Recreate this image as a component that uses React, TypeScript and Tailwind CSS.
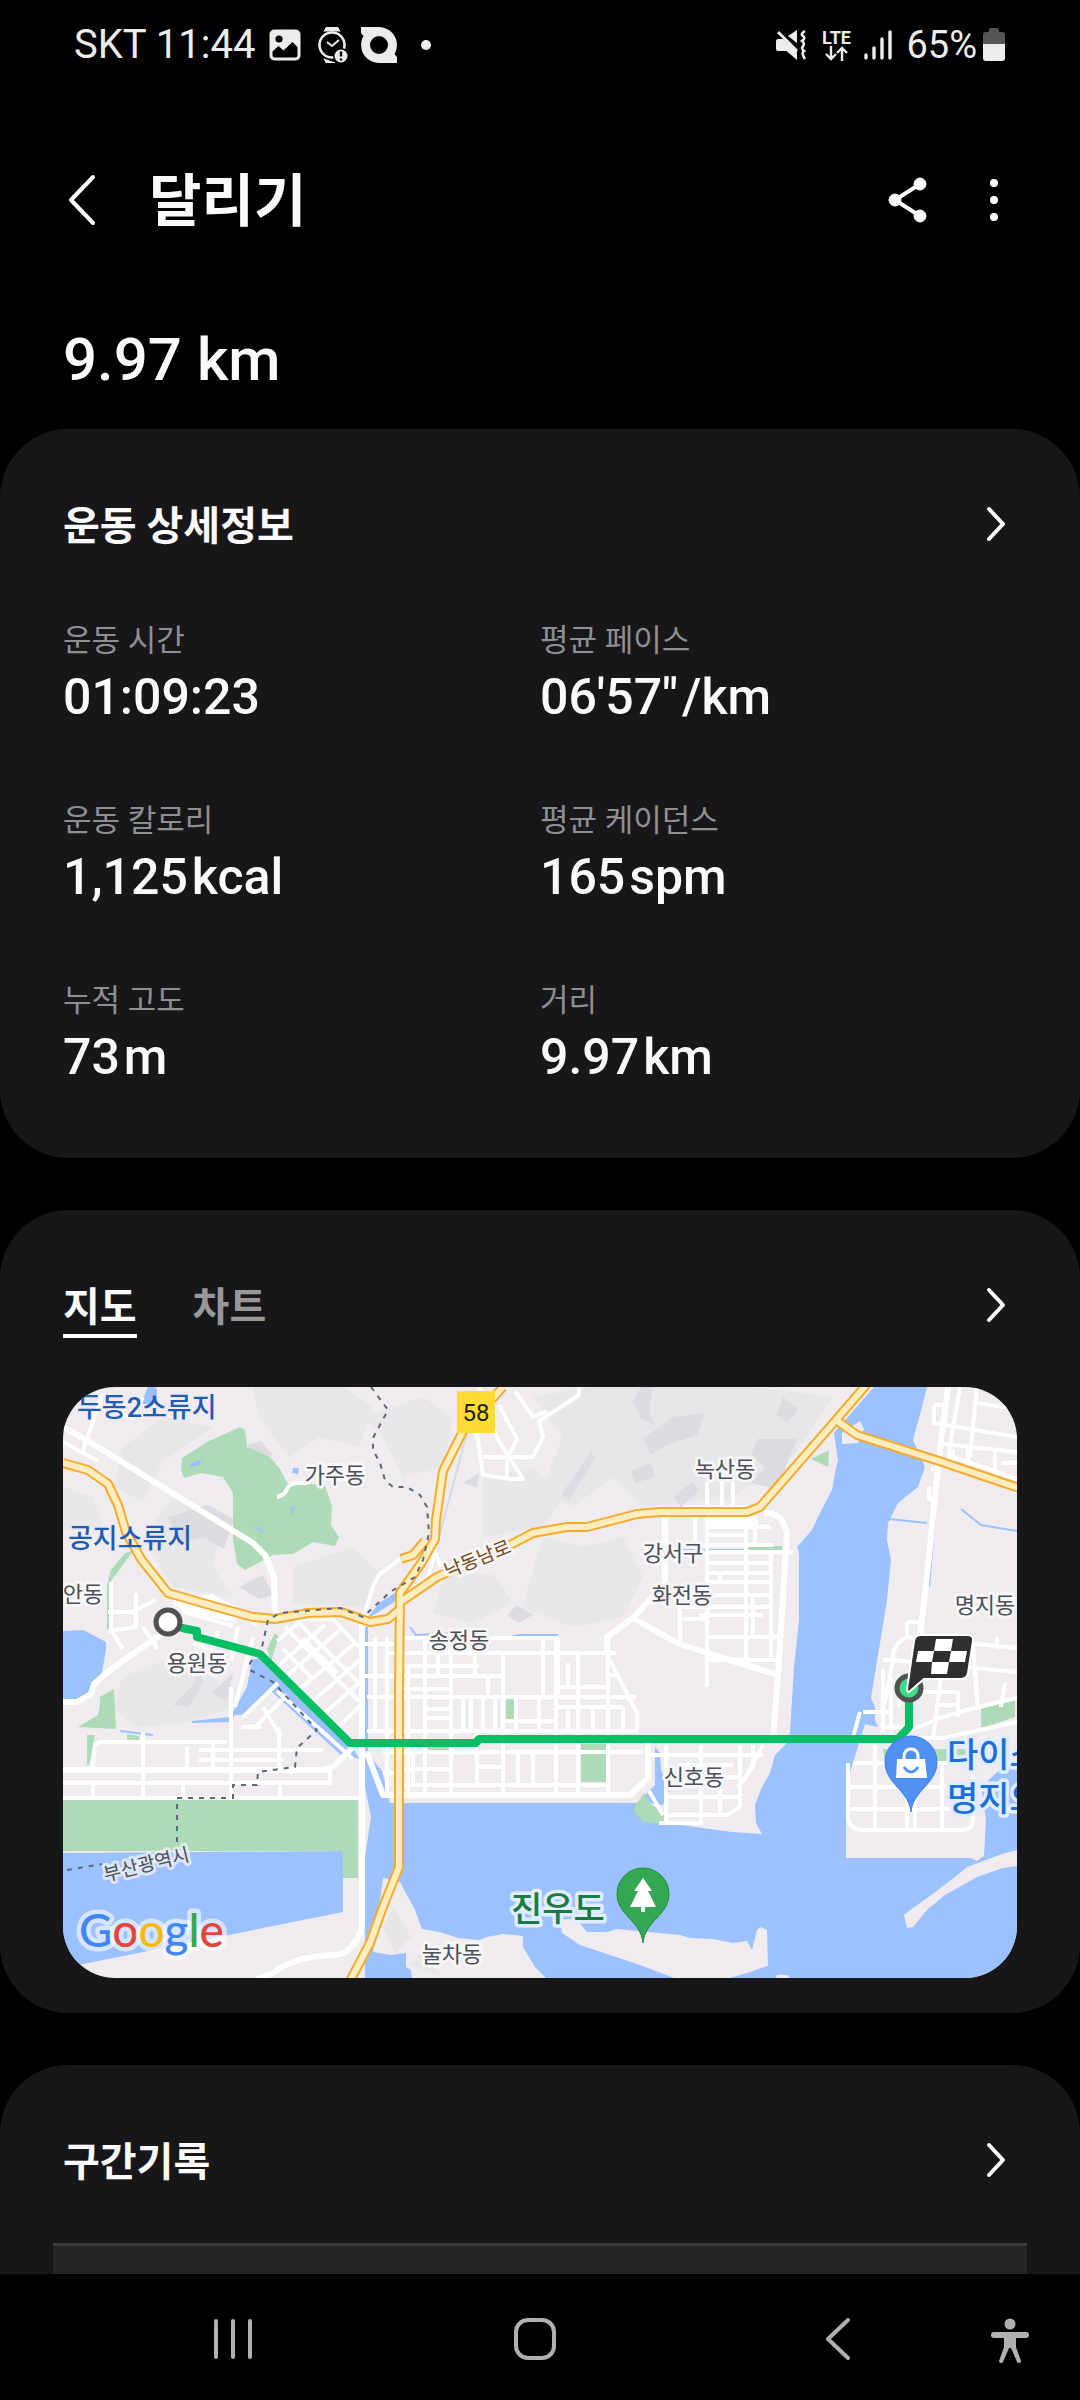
import type { ReactNode } from "react";

const stats = [
  { label: "운동 시간", value: "01:09:23", unit: "" },
  { label: "평균 페이스", value: "06'57\"", unit: "/km" },
  { label: "운동 칼로리", value: "1,125", unit: "kcal" },
  { label: "평균 케이던스", value: "165", unit: "spm" },
  { label: "누적 고도", value: "73", unit: "m" },
  { label: "거리", value: "9.97", unit: "km" },
];

function StatusBar() {
  return (
    <div className="flex h-[90px] items-center justify-between pl-[74px] pr-[75px] text-[#ececec]">
      <div className="flex items-center">
        <span className="text-[40px] leading-[48px]">SKT 11:44</span>
        <svg className="ml-[14px] h-8 w-8" viewBox="0 0 32 32" fill="none">
          <rect x="0.5" y="0.5" width="31" height="31" rx="5" fill="#ececec" />
          <circle cx="10" cy="10" r="3.6" fill="#000" />
          <path d="M3.5 22.5 9.5 17l5 4.5L23.500 13l5 5V26q0 2.500-2.500 2.500H6Q3.500 28.500 3.500 26Z" fill="#000" />
        </svg>
        <svg className="ml-4 h-9 w-8" viewBox="0 0 32 36" fill="none">
          <path d="M7 4.500 9 .5h12l2 4M7 31.500 9 35.500h9" fill="#ececec" stroke="#ececec" />
          <circle cx="15" cy="18" r="12.500" stroke="#ececec" strokeWidth="2.600" />
          <path d="m10 15 5 4 7-6" stroke="#ececec" strokeWidth="2" />
          <circle cx="24" cy="29" r="8" fill="#000" />
          <circle cx="24" cy="29" r="6.500" fill="#ececec" />
          <path d="M24 24.500v5M24 31.500v2" stroke="#000" strokeWidth="2.400" />
        </svg>
        <svg className="ml-3 h-9 w-9" viewBox="0 0 36 36">
          <path
            fillRule="evenodd"
            d="M0 0h18a18 18 0 0 1 15.500 27l2.500 3v6H18A18 18 0 0 1 2.500 9L0 6Zm18 9a9 9 0 1 0 0 18 9 9 0 0 0 0-18Z"
            fill="#ececec"
          />
        </svg>
        <span className="ml-6 h-[10px] w-[10px] rounded-full bg-[#ececec]" />
      </div>
      <div className="flex items-center">
        <svg className="h-8 w-[30px]" viewBox="0 0 30 32" fill="none">
          <path d="M12 7 21 1v13ZM2 10h5l14 12v9L10.500 22H2Q0 22 0 20v-8q0-2 2-2Z" fill="#ececec" />
          <path d="M2 3 21 22" stroke="#ececec" strokeWidth="3" />
          <path d="M29 2q-5 3-2 5t-1 5q3 2 1 5t1 5q-3 2 1 8" stroke="#ececec" strokeWidth="2.600" />
        </svg>
        <div className="ml-[14px] flex w-8 flex-col items-center">
          <span className="text-[18px] font-bold leading-4">LTE</span>
          <svg className="h-[15px] w-6" viewBox="0 0 24 15" fill="none" stroke="#ececec" strokeWidth="2.400">
            <path d="M7 0v13M2 8l5 5 5-5M18 15V2M13 7l5-5 5 5" />
          </svg>
        </div>
        <svg className="ml-3 h-8 w-7" viewBox="0 0 28 32" stroke="#ececec" strokeWidth="3.400" strokeLinecap="round">
          <path d="M2 26v3M10 19v10M18 10v19M26 3v26" />
        </svg>
        <span className="ml-[14px] text-[38px] leading-[48px]">65%</span>
        <svg className="ml-[6px] h-[34px] w-[22px]" viewBox="0 0 22 34">
          <path d="M6 2q0-2 2-2h6q2 0 2 2v2h3q3 0 3 3v10H0V7q0-3 3-3h3Z" fill="#555" />
          <path d="M0 16h22v14q0 3-3 3H3q-3 0-3-3Z" fill="#ececec" />
        </svg>
      </div>
    </div>
  );
}

function Header() {
  return (
    <header className="mt-[45px] flex h-[130px] items-center pl-[63px] pr-[73px]">
      <button type="button" aria-label="뒤로" className="w-[86px]">
        <svg className="h-[52px] w-9" viewBox="0 0 36 52" fill="none" stroke="#fff" strokeWidth="4" strokeLinecap="round" strokeLinejoin="round">
          <path d="M30 3 8 26l22 23" />
        </svg>
      </button>
      <h1 className="pt-1 text-[57px] font-bold leading-[80px]">달리기</h1>
      <button type="button" aria-label="공유" className="ml-auto">
        <svg className="h-[46px] w-10" viewBox="0 0 40 46" fill="#fff" stroke="#fff">
          <path d="M32 7 7 23l25 16" fill="none" strokeWidth="4" />
          <circle cx="32" cy="7" r="6" />
          <circle cx="7" cy="23" r="6" />
          <circle cx="32" cy="39" r="6" />
        </svg>
      </button>
      <button type="button" aria-label="더보기" className="ml-[53px]">
        <svg className="h-[46px] w-[26px]" viewBox="0 0 26 46" fill="#fff">
          <circle cx="13" cy="6" r="4" />
          <circle cx="13" cy="23" r="4" />
          <circle cx="13" cy="40" r="4" />
        </svg>
      </button>
    </header>
  );
}

function MoreButton({ label }: { label: string }) {
  return (
    <button type="button" aria-label={label} className="mb-[2px] ml-auto mr-[10px]">
      <svg className="h-9 w-[22px]" viewBox="0 0 22 36" fill="none" stroke="#fff" strokeWidth="4" strokeLinecap="round" strokeLinejoin="round">
        <path d="m4 3 14 15L4 33" />
      </svg>
    </button>
  );
}

function Title({ children }: { children: ReactNode }) {
  return <h2 className="pt-1 text-[40px] font-bold leading-[60px]">{children}</h2>;
}

const water = "#9cc1ff";
const land = "#efebef";
const park = "#addbb7";

// hillside shading
const hillsLight = [
  "M190 0h90l30 20-14 40-40-10-30 20-30-40Z",
  "M60 60l40-30 50 10-20 14-30 20-20 40-30-14Z",
  "M300 30l60-20 30 20-10 50-40 10-20-40Z",
  "M470 10l60-10h160l80 10-40 60-60 40-90 10-30-30-40 30-30-20 20-50Z",
  "M420 90l50-10 30 30-20 30-60 10Z",
  "M230 180l60-20 30 30-20 30-70-4Z",
  "M110 110l50 20-10 50 20 30-60-10-30-50Z",
  "M480 150l40 10 40-10 20 40-20 40-50 10-50-20Z",
  "M380 190l50-4 20 30-40 20-40-10Z",
  "M60 290l50-20 40 20 20 30-50 16-50 4-20-20Z",
  "M0 100l30 10 10 30-40 4Z",
];
const hillsDark = [
  "M580 52l30-22 32-4-8 22-30 10-16 10Z",
  "M694 52l40 0-20 50-26-6 14-16-14-12Z",
  "M720 10l16 12-12 14-10-8Z",
  "M498 108l30-44 4 8-26 40Z",
  "M568 84l20-8 4 14-20 6Z",
  "M105 130l40-12 26 14-10 30-20-12-24 6Z",
  "M184 58l14-4 12 14-14 6Z",
  "M176 200l24-12 10 20-14 4Z",
  "M110 318l20-20 6-20 4 18-14 24Z",
  "M570 14l8-14h12l-4 24 6 14-14-6Z",
  "M610 110l20-16 6 10-18 16Z",
  "M400 96l16-10-2 14Z",
  "M444 228l10-10 16 10-14 8Z",
  "M148 306l22-20-6 28Z",
];

const parks = [
  "M119 71 144 55l33-15 5 3 2 17 23 10 10 12 7 14 38 2 7 22-1 18 8 12-4 9-22-4-20 12-20 1-28 15-8-6-4-25V106l-10-16-22-4-17 5-3-8Z",
  "M0 413h295v78h-15v-27H0Z",
  "M48 183l14-17 8-2-22 30v49h-4v-45Z",
  "M37 318l0-8 14-8 2 40-38-2 20-12Z",
  "M24 348h8l-6 30h-2ZM64 347l12 2v4H64Z",
  "M204 262l8-16 4 4-8 24Z",
  "M518 357h25v38h-25ZM443 312h8v21h-8ZM365 358h22v5h-22Z",
  "M820 362h94l-12 14h-80Z",
  "M918 322l34-10v18l-30 10h-4Z",
  "M748 72l18-9-1 17Z",
];

const waters = [
  "M0 244 20 243l23 12v8l-4 22-10 13-2 8-13 9H0Z",
  "M0 466l280-2v61L0 581Z",
  "M302 591V470l6-40-6-30V372l-22-2-73-67-28 25h-7l-5 7-38 1v-2l38-4 17-30 5-27 8-3 95 94 3 6 14 2 10 12 8 32h247l18-18V360l5 6 1 17 8 20-6 15-16-2-7 7 10 12 24 2 58 8 30 2-6-11-1-18 7-18 8-14 5-18 11-11 4-11 4-66 5-47V165l-2-5 15-17 6-13 14-27 3-17 3-13-4-27 40-46h53l-5 20-9 33 12 27-7 20-20 16-10 20-1 17 4 20-4 40-16 98 4 9v13l3 7-13-3-9 29-10 32v73h125l6 3 7-5 2-36-5-33 22-20 17-10v241Z",
  "M82 7l6-14 6 10v14H76ZM230 81l6 0-1 6-6-1Z",
];

const islands = [
  "M954 463l-15 4-35 13-12 10-25 19-17 12-9 7 3 13 6-1 14-17 18-15 32-18 26-9 14-2Z",
  "M497 533l15-2 12 14h20l10-3 63 6 10 3 23 1 20 4 14-2 5 9 5-20 4-3 6 3 1 36-21 7-17 5h-56l-34-13-60-20-18-12Z",
  "M320 491l17 4 15 28 7 19 18 3 18 6 22 2 7-3 16-3 20 2v11l12 20 11 11H349l-1-8-5-3v-14l-16 2-17-3Z",
  "M714 588l10 0 3 3h-14ZM779 46l18-12 4 8-6 14-16 1Z",
];

const arterials = [
  "M0 40 27 55 164 140 190 156 202 168 211 190 212 232",
  "M0 383H255q14 0 20-8L290 360",
  "M299 235V535q0 12-9 23t-20 10q-40 2-60 18l-16 6",
  "M701 126q14 0 18 8t5 12L715 288 710 352",
  "M885 0 876 70 866 170 857 250",
  "M637 264 715 288",
  "M570 231 614 256 657 270 715 288",
  "M602 130V196L570 231 544 250V268",
  "M585 350V391L567 408H320L304 366",
  "M0 315h14l14-8 3-10 16-14 40-28 18-12",
];

const streets = [
  "M40 6 20 63M0 55 35 74M45 20 70 32 80 10M45 225l24 0 24-12M48 195V243L60 262M73 206V240L45 244M80 240 95 262M110 218l30-6 30 10 24 16M120 225l50 14M130 256l30 12M155 244 150 262M175 240 168 274M190 250 172 320",
  "M29 382 32 358 37 355H164M0 396H267V382M0 411H297M80 345V411M30 396V411M120 396V411M168 300V411M217 396V411M124 360V383M136 363H260M136 373H220M124 383M150 355V383M180 330 215 296M190 342 224 308M178 340h20M200 320l18 30M214 304 290 372M216 340v42",
  "M215 232H270L296 260M222 240 296 314M232 232 296 296M214 254 240 232M214 280 262 238M225 288 278 242M237 302 292 256M250 314 298 272M262 326 298 294M275 340 298 318M220 262l30 30M240 252l34 34",
  "M296 257H336M299 289H336M304 310H336M304 344H336M312 250V300M324 250V409M312 300V344M320 365H336M320 386H336",
  "M337 251H495M325 266H553M337 279H416M337 289H440M307 310H573M337 302H390M337 344H576M337 365H580M337 382H388M337 398H545M345 280V409M350 366V398M362 250V409M375 266V289M388 250V409M412 266V289M416 380H440M414 344V398M440 266V409M455 365V398M470 365V398M480 251V310M493 251V409M515 266V409M545 266V409M362 322H388M362 331H388M400 310V344M408 310V344M420 310V344M432 310V344M453 310V344M476 310V344M440 334H493M493 300H545M505 276V300M493 320H560M505 320V344M530 320V344M560 320V344M425 289V310M547 273 574 326V344M495 251V310M547 288H555",
  "M416 0 432 46 436 54 460 92 448 92 420 88 414 46M436 18 454 52 444 72V92M452 4 470 30 484 24M420 70H470L480 50 476 34 516 8V0",
  "M644 95V300M659 95V126M670 95V126M632 130V158M683 126V280M708 165V270M621 120H684M644 134H690M644 140H708M644 148H683M692 140V158M632 158H710M644 165H730M644 176H708M644 186H708M644 195H708M644 208H708M617 220H708M637 228H700M644 250H715M644 273H715M617 220V256M657 186V195M690 208V250M620 232H644",
  "M603 358V435M638 358V436M657 380V428M677 358V420L664 428H603M588 368H700M603 410H675M603 390H677M615 378H670M690 358V380L675 400M700 358 680 395M586 404 600 428M596 436H640",
  "M897 0 885 72M914 0 907 70M871 18H885M871 18V36L954 50M880 57 954 65M914 16 954 22M885 68 954 92M905 60V84M890 62V80M932 62V88M938 76H954M868 82H876M866 100V112H872",
  "M820 273 830 273V265L836 255 844 250 954 261M830 273 954 285M830 273 822 315M820 282V345M828 290V352M836 290V320M844 235V250M844 235H857M910 258 915 323M870 333 915 320 954 311M878 290 870 352M860 305H895V330M872 318H895M820 340H845M832 350 870 334M934 250V262M942 296 938 320M797 325 790 350M797 351H880L954 335M800 325H830M790 376H912M784 400H915M784 422H915M785 376V430Q786 443 800 443H900Q910 443 910 430V376M812 358V443M844 400V443M852 400V443M879 376V443",
];

const highways = [
  "M0 76 25 83 45 97 55 118 63 145 78 172 105 206 150 219 190 230 212 232 245 226 278 225 307 235 325 232 337 222",
  "M440 0 400 44 380 84 373 133 372 152 359 175 337 206 336 303V480L320 520 307 556 287 594",
  "M338 172 350 168 362 154",
  "M336 216 374 190 447 158 470 146 504 140 524 140 574 127 597 125H684L697 120 773 33 804-3",
  "M773 33 794 48 876 74 938 95 956 101",
];

const smallLabels = [
  { text: "가주동", x: 272, y: 96 },
  { text: "안동", x: 20, y: 215 },
  { text: "용원동", x: 134, y: 284 },
  { text: "송정동", x: 396, y: 261 },
  { text: "강서구", x: 610, y: 174 },
  { text: "화전동", x: 619, y: 216 },
  { text: "녹산동", x: 662, y: 90 },
  { text: "명지동", x: 922, y: 226 },
  { text: "신호동", x: 631, y: 398 },
  { text: "눌차동", x: 389, y: 575 },
];

function RouteMap() {
  return (
    <svg
      role="img"
      aria-label="달리기 경로 지도"
      className="mt-[49px] h-auto w-full rounded-[52px] font-['Roboto','Noto_Sans_CJK_KR',sans-serif]"
      viewBox="0 0 954 591"
      fill="none"
    >
      <rect width="954" height="591" fill={land} />
      {hillsLight.map((d) => <path key={d} d={d} fill="#e7e7e9" />)}
      {hillsDark.map((d) => <path key={d} d={d} fill="#dcdbdf" />)}
      {waters.map((d) => <path key={d} d={d} fill={water} />)}
      {islands.map((d) => <path key={d} d={d} fill={land} />)}
      {parks.map((d) => <path key={d} d={d} fill={park} />)}
      <path d="M570 423l11-17 8 12 14 8v11l-23-2Z" fill={park} />
      <path d="M320 540l10-20 18 30-16 16ZM345 578l16-14 14 24Z" fill="#e6e6e8" />
      <path d="M127 77l12-5-3 6-8 2ZM228 118l4 3-4 8ZM190 139l10 4-1 3Z" fill={water} />
      <path d="M301 238V366M90 348 57 344M347 240l6 8 40-2 50 6 12-4h40M612 163h80M826 132l38 4M876 80 866 200M898 122l20 16 36 6" stroke={water} strokeWidth="2" />
      <path d="M303 240V364" stroke={water} strokeWidth="4" />
      <path d="M685 161h34" stroke={park} strokeWidth="4" />
      <path d="M404 46 376 150" stroke="#d4dade" strokeWidth="2" />
      <path d="M304 232 316 216 332 206 336 212Z" fill={water} />

      <g stroke="#fff" strokeLinejoin="round">
        {streets.map((d) => <path key={d} d={d} strokeWidth="4" />)}
        {arterials.map((d) => <path key={d} d={d} strokeWidth="6" />)}
        <path d="M214 110q8-2 10-8t12-6h8M300 232 310 200 316 188 337 172M345 206 366 188 372 164 378 180" strokeWidth="4" />
        <path d="M112 214 148 208 176 222 172 234 120 224ZM646 130h48v8h-48Z" fill="#fff" strokeWidth="2" />
      </g>

      <g strokeLinejoin="round">
        {highways.map((d) => <path key={d} d={d} stroke="#f3ac2c" strokeWidth="10" />)}
        {highways.map((d) => <path key={d} d={d} stroke="#ffecbf" strokeWidth="6" />)}
      </g>

      <path
        d="M308 0 325 23 310 51V63L317 76 322 93 330 100H344L357 108 364 120 366 146 360 173 352 190 327 205 300 230 277 221 217 226 205 233 199 260 187 276V283L210 295 254 343 234 361 232 380 195 385 194 398H170V411H114V460M4 483 39 477"
        stroke="#5c6878"
        strokeWidth="2"
        strokeDasharray="5 6"
      />

      <path
        d="M105 237 119 241 134 244V250L197 267 287 356H413L416 352H835L846 340V313"
        stroke="#04bf63"
        strokeWidth="8"
        strokeLinejoin="round"
      />

      <rect x="394" y="4" width="38" height="42" fill="#ffdb33" />
      <text x="413" y="34" textAnchor="middle" fontSize="24" fill="#1f1f14">58</text>

      <g fontSize="22" fill="#4c4f54" stroke="#f7f6f8" strokeWidth="6" strokeLinejoin="round" paintOrder="stroke" textAnchor="middle">
        {smallLabels.map((l) => <text key={l.text} x={l.x} y={l.y}>{l.text}</text>)}
        <text transform="translate(85 484) rotate(-14)" fontSize="19" strokeOpacity="0.7">부산광역시</text>
        <text transform="translate(417 178) rotate(-22)" fontSize="19" fill="#7a4512">낙동남로</text>
      </g>
      <g fontSize="27" fill="#1f5cb4" className="font-medium">
        <text x="14" y="30">두동2소류지</text>
        <text x="5" y="161">공지소류지</text>
      </g>
      <g fontSize="34" stroke="#e0ecff" strokeWidth="7" strokeLinejoin="round" paintOrder="stroke" className="font-medium">
        <text x="448" y="534" fill="#1b7a40">진우도</text>
        <text x="884" y="380" fill="#1a6fdb">다이소</text>
        <text x="884" y="424" fill="#1a6fdb">명지오</text>
      </g>

      <path d="M848 425c-2-22-26-28-26-50a26 26 0 0 1 52 0c0 22-24 28-26 50Z" fill="#4f90f3" stroke="#3f7fe0" />
      <path d="M834 372h28l2 19h-31Z" fill="#fff" />
      <path d="M841 373v-3q0-8 7-8t7 8v3" stroke="#fff" strokeWidth="3" />
      <path d="M841 380q7 10 14 0" stroke="#4f90f3" strokeWidth="3" />

      <path d="M580 556c-2-22-26-28-26-49a26 26 0 0 1 52 0c0 21-24 27-26 49Z" fill="#33a752" stroke="#248a40" />
      <path d="m580 491 9 13h-4l8 16h-11v5h-4v-5h-11l8-16h-4Z" fill="#fff" />

      <circle cx="105" cy="235" r="12" fill="#fff" stroke="#505050" strokeWidth="5" />
      <circle cx="846" cy="301" r="12" fill="#3ddb86" stroke="#505050" strokeWidth="5" />
      <path
        d="M858 248h46q7 0 6 6l-5 32q-1 6-7 6h-37l-15 13q-2 0-2-3l7-48q1-6 7-6Z"
        fill="#2f2f2f"
        stroke="#fff"
        strokeWidth="2"
      />
      <path d="M873 252h17l-2 12h-17ZM855 264h16l-2 11h-16ZM888 264h16l-2 11h-16ZM869 275h17l-2 12h-16Z" fill="#fff" />

      <text
        x="16"
        y="560"
        fontSize="46"
        className="font-['Lato',sans-serif] font-medium"
        stroke="#fff"
        strokeOpacity="0.6"
        strokeWidth="9"
        strokeLinejoin="round"
        paintOrder="stroke"
      >
        <tspan fill="#4285f4">G</tspan>
        <tspan fill="#e2463b">o</tspan>
        <tspan fill="#f5b90f">o</tspan>
        <tspan fill="#4285f4">g</tspan>
        <tspan fill="#37a852">l</tspan>
        <tspan fill="#e2463b">e</tspan>
      </text>
    </svg>
  );
}

function NavBar() {
  return (
    <nav className="grid h-[126px] grid-cols-[1fr_1fr_1fr_42px] items-center justify-items-center bg-black pl-[82px] pr-[49px] pt-1">
      <button type="button" aria-label="최근 앱">
        <svg className="h-11 w-11" viewBox="0 0 44 44" stroke="#b0b0b0" strokeWidth="4" strokeLinecap="round">
          <path d="M5 4v36M22 4v36M39 4v36" />
        </svg>
      </button>
      <button type="button" aria-label="홈">
        <svg className="h-11 w-11" viewBox="0 0 44 44" fill="none" stroke="#b0b0b0" strokeWidth="4">
          <rect x="3" y="3" width="38" height="38" rx="12" />
        </svg>
      </button>
      <button type="button" aria-label="뒤로 가기">
        <svg className="h-11 w-11" viewBox="0 0 44 44" fill="none" stroke="#b0b0b0" strokeWidth="4" strokeLinecap="round" strokeLinejoin="round">
          <path d="M32 3 12 22l20 19" />
        </svg>
      </button>
      <button type="button" aria-label="접근성" className="pt-1">
        <svg className="h-[46px] w-10" viewBox="0 0 40 46" fill="#b0b0b0">
          <circle cx="20" cy="6" r="5.500" />
          <path d="M4 14h32q3 0 3 3t-3 3H26v9l5 14q0 2-2 2t-2-1l-6-14h-2l-6 14q0 1-2 1t-2-2l5-14v-9H4q-3 0-3-3t3-3Z" />
        </svg>
      </button>
    </nav>
  );
}

export default function App() {
  return (
    <div className="flex min-h-screen flex-col bg-black font-['Roboto','Noto_Sans_CJK_KR',sans-serif] text-[#fafafa]">
      <StatusBar />
      <Header />
      <main className="flex grow flex-col gap-[52px]">
        <div>
          <p className="px-[63px] pb-[29px] pt-[55px] text-[60px] font-medium leading-[80px]">9.97 km</p>
          <section className="rounded-[68px] bg-[#17171a] px-[63px] pb-[65px] pt-16">
            <div className="flex items-center">
              <Title>운동 상세정보</Title>
              <MoreButton label="운동 상세정보 보기" />
            </div>
            <dl className="mt-16 grid grid-cols-2 gap-y-[68px]">
              {stats.map((s) => (
                <div key={s.label}>
                  <dt className="text-[31px] leading-[40px] text-[#8f8f91]">{s.label}</dt>
                  <dd className="flex gap-1 text-[50px] font-medium leading-[72px]">
                    <span>{s.value}</span>
                    {s.unit && <span>{s.unit}</span>}
                  </dd>
                </div>
              ))}
            </dl>
          </section>
        </div>

        <section className="rounded-[68px] bg-[#17171a] px-[63px] pb-[35px] pt-16">
          <div className="flex items-center">
            <div role="tablist" className="flex gap-14 text-[40px] font-bold leading-[52px]">
              <button type="button" role="tab" aria-selected="true" className="border-b-4 border-white pt-2">
                지도
              </button>
              <button type="button" role="tab" aria-selected="false" className="border-b-4 border-transparent pt-2 text-[#98989a]">
                차트
              </button>
            </div>
            <MoreButton label="지도 보기" />
          </div>
          <RouteMap />
        </section>

        <section className="flex grow flex-col rounded-t-[68px] bg-[#17171a] px-[53px] pt-16">
          <div className="flex items-center px-[10px]">
            <Title>구간기록</Title>
            <MoreButton label="구간기록 보기" />
          </div>
          <div className="mt-[50px] min-h-[31px] grow border-t-[3px] border-[#3a3a3b] bg-[#252525]" />
        </section>
      </main>
      <NavBar />
    </div>
  );
}
